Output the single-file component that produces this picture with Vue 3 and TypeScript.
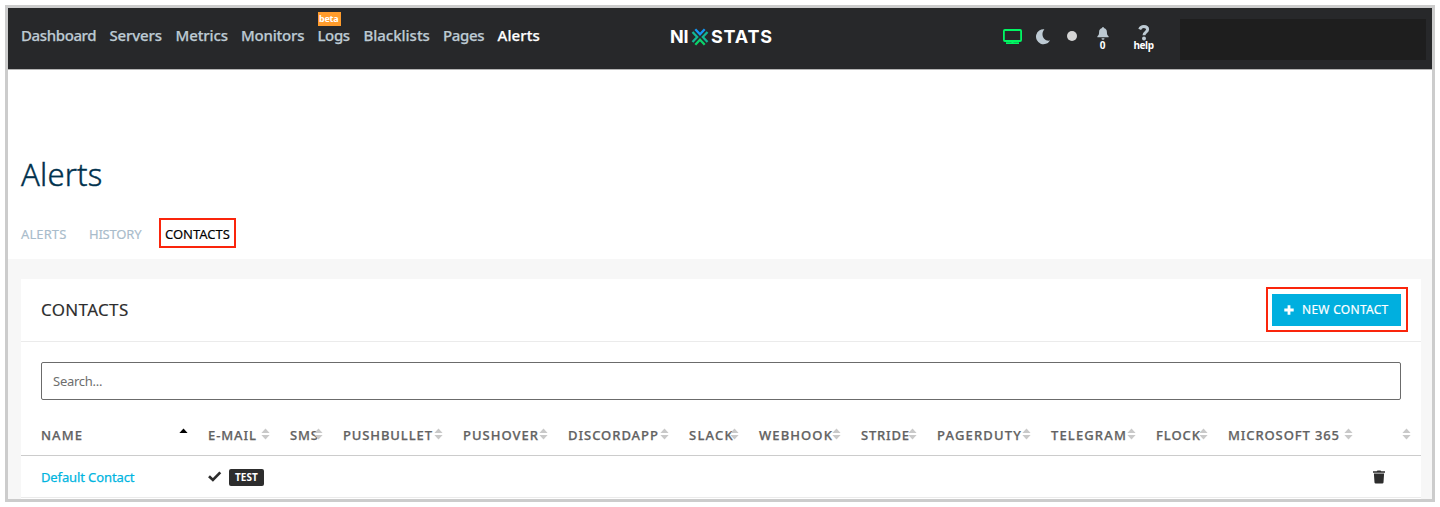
<script setup lang="ts">
interface NavItem { label: string; width: number; badge?: string; active?: boolean }
interface Column { label: string; width: number; sorted?: boolean }

const nav: NavItem[] = [
  { label: 'Dashboard', width: 75 },
  { label: 'Servers', width: 52 },
  { label: 'Metrics', width: 52 },
  { label: 'Monitors', width: 63 },
  { label: 'Logs', width: 32, badge: 'beta' },
  { label: 'Blacklists', width: 66 },
  { label: 'Pages', width: 41 },
  { label: 'Alerts', width: 42, active: true },
]

const columns: Column[] = [
  { label: 'NAME', width: 41, sorted: true },
  { label: 'E-MAIL', width: 48 },
  { label: 'SMS', width: 28 },
  { label: 'PUSHBULLET', width: 89 },
  { label: 'PUSHOVER', width: 75 },
  { label: 'DISCORDAPP', width: 90 },
  { label: 'SLACK', width: 44 },
  { label: 'WEBHOOK', width: 73 },
  { label: 'STRIDE', width: 48 },
  { label: 'PAGERDUTY', width: 84 },
  { label: 'TELEGRAM', width: 75 },
  { label: 'FLOCK', width: 44 },
  { label: 'MICROSOFT 365', width: 111 },
  { label: '', width: 0 },
]

// Tracks a label so that it fills the given width in pixels.
const vFit = {
  mounted(el: HTMLElement, binding: { value: number }) {
    const count = (el.textContent ?? '').length
    if (count < 2) return
    const natural = el.getBoundingClientRect().width
    el.style.letterSpacing = `${(binding.value + 0.4 - natural) / (count - 0.5)}px`
  },
}
</script>

<template>
  <div class="frame">
    <header class="topbar">
      <nav class="nav">
        <a v-for="item in nav" :key="item.label" class="nav-item" :class="{ active: item.active }">
          <span v-fit="item.width" class="label">{{ item.label }}</span>
          <span v-if="item.badge" class="beta"><span v-fit="19" class="label">{{ item.badge }}</span></span>
        </a>
      </nav>
      <div class="logo">
        <span v-fit="18" class="label">NI</span>
        <svg class="mark" width="18" height="18" viewBox="0 0 18 18" fill="none" stroke-width="2.300">
          <path d="M1.500 4 6.200 9 1.500 14" stroke="#12b795" />
          <path d="M16.500 4 11.800 9 16.500 14" stroke="#12b795" />
          <path d="M4.300 1.200 9 6.200 13.700 1.200" stroke="#1597f5" />
          <path d="M4.300 16.800 9 11.800 13.700 16.800" stroke="#0bd36c" />
        </svg>
        <span v-fit="61" class="label">STATS</span>
      </div>
      <div class="tools">
        <svg class="monitor" width="20" height="16" viewBox="0 0 20 16">
          <rect x=".9" y="1" width="17.200" height="11" rx="1" fill="none" stroke="#00f763" stroke-width="1.800" />
          <path d="M8.500 12h2v1.200h5.500V15H3v-1.800h5.500z" fill="#00f763" />
        </svg>
        <svg class="moon" width="15" height="16" viewBox="0 0 15 16">
          <path d="M8.400.3A7.500 7.500 0 1 0 14 11.500C8 12.800 3.900 5.600 8.400.3Z" fill="#bdcad3" />
        </svg>
        <span class="dot"></span>
        <div class="tool bell">
          <svg width="12" height="13" viewBox="0 0 12 13" fill="#bdcad3">
            <path d="M5.300 0h1.400v1C8.900 1.400 9.900 3 9.900 5c0 2.300.5 3.300 1.700 4.300v1H.4v-1C1.600 8.300 2.100 7.300 2.100 5c0-2 1-3.600 3.200-4zM4.500 11.200h3a1.500 1.500 0 0 1-3 0z" />
          </svg>
          <span>0</span>
        </div>
        <div class="tool help">
          <svg width="12" height="16" viewBox="0 0 12 16">
            <path d="M1.700 4.400C2.500 2.500 4 1.600 5.800 1.600c2.200 0 3.800 1.200 3.800 3 0 2.600-3.600 2.500-3.600 5.600" fill="none" stroke="#bdcad3" stroke-width="3" />
            <circle cx="6" cy="13.500" r="2" fill="#bdcad3" />
          </svg>
          <span v-fit="20" class="label">help</span>
        </div>
        <div class="account"></div>
      </div>
    </header>

    <section class="heading">
      <h1><span v-fit="81" class="label">Alerts</span></h1>
      <div class="tabs">
        <a class="tab"><span v-fit="45" class="label">ALERTS</span></a>
        <a class="tab second"><span v-fit="52" class="label">HISTORY</span></a>
        <a class="tab current"><span v-fit="64.500" class="label">CONTACTS</span></a>
      </div>
    </section>

    <main class="content">
      <div class="card">
        <div class="card-head">
          <h2><span v-fit="87" class="label">CONTACTS</span></h2>
          <div class="ring">
            <button class="create">
              <svg width="10" height="10" viewBox="0 0 10 10"><path d="M3.600.3h2.800v3.300h3.300v2.800H6.400v3.300H3.600V6.400H.3V3.600h3.300z" fill="#fff" /></svg>
              <span v-fit="86" class="label">NEW CONTACT</span>
            </button>
          </div>
        </div>
        <div class="search"><span v-fit="49" class="label">Search...</span></div>
        <div class="grid thead">
          <div v-for="col in columns" :key="col.label" class="th">
            <span v-fit="col.width" class="label">{{ col.label }}</span>
            <svg class="sort" width="9" height="12" viewBox="0 0 9 12" :class="{ on: col.sorted }">
              <path d="M.4 5 4.500.6 8.600 5z" />
              <path v-if="!col.sorted" d="M.4 7 4.500 11.400 8.600 7z" />
            </svg>
          </div>
        </div>
        <div class="grid row">
          <a class="contact"><span v-fit="93" class="label">Default Contact</span></a>
          <div class="email">
            <svg width="14" height="11" viewBox="0 0 14 11"><path d="M1 5.200 4.900 8.900 12.300 1.400" fill="none" stroke="#2d2d2d" stroke-width="2.700" /></svg>
            <span class="test"><span v-fit="22.500" class="label">TEST</span></span>
          </div>
          <svg class="trash" width="12" height="14" viewBox="0 0 12 14" fill="#2d2d2d">
            <path d="M0 1.300h3.700L4.500.4h3l.8.9H12v1.500H0zM.9 3.600h10.200l-.6 9a1.200 1.200 0 0 1-1.200 1H2.700a1.200 1.200 0 0 1-1.200-1z" />
          </svg>
        </div>
      </div>
    </main>
  </div>
</template>

<style>
body { background: #fff; }
</style>

<style scoped>
.frame {
  box-sizing: border-box;
  width: 1430px;
  height: 497px;
  margin: 5px;
  border: 3px solid #ccc;
  background: #fff;
  overflow: hidden;
  font-family: "Noto Sans", "Open Sans", sans-serif;
  display: flex;
  flex-direction: column;
}
.frame * { box-sizing: border-box; }
.label { display: inline-block; white-space: nowrap; }

.topbar {
  height: 62px;
  flex: none;
  background: #27282a;
  border-bottom: 1px solid #b4b4b4;
  display: flex;
}
.nav {
  width: 662px;
  padding-left: 13px;
  display: grid;
  grid-template-columns: 88.500px 66px 65.500px 76.500px 46px 79.500px 54.500px 44px;
}
.nav-item {
  position: relative;
  color: #bdcad3;
  font-size: 15px;
  font-weight: 500;
  line-height: 20px;
  padding-top: 17px;
}
.nav-item > .label { -webkit-text-stroke: 0.250px currentColor; }
.nav-item.active { color: #fff; }
.beta {
  position: absolute;
  left: 0;
  top: 4px;
  width: 23px;
  height: 14px;
  padding-left: 1.500px;
  background: #ff9c2c;
  color: #fff;
  font-size: 9px;
  font-weight: 700;
  line-height: 13px;
}
.logo {
  width: 333px;
  padding-top: 18px;
  display: grid;
  grid-template-columns: 20.500px 20.500px 70px;
  color: #fff;
  font: 700 18px/22px Inter, sans-serif;
}
.logo .label { justify-self: start; }
.mark { margin: 2px 0 0 1px; }
.tools { flex: 1; display: flex; align-items: flex-start; }
.monitor { margin-top: 20.500px; }
.moon { margin: 21px 0 0 13px; }
.dot {
  width: 10px;
  height: 10px;
  margin: 23px 0 0 16px;
  border-radius: 50%;
  background: #d5d5d5;
}
.tool {
  display: flex;
  flex-direction: column;
  align-items: center;
  color: #fff;
  font-size: 10px;
  font-weight: 700;
  line-height: 10px;
}
.bell { width: 12px; margin: 19px 0 0 19.500px; }
.help { width: 22px; margin: 17px 0 0 24px; }
.help svg { height: 16px; margin-bottom: -1px; }
.account { width: 246px; height: 41px; margin: 11px 0 0 25.500px; background: #1e1e1e; }
.mark { margin-left: 0; }

.heading { height: 189px; flex: none; padding-left: 13px; }
h1, h2 { margin: 0; }
h1 {
  height: 40px;
  padding-top: 1px;
  margin-top: 83px;
  color: #00314d;
  font-size: 31px;
  font-weight: 300;
  line-height: 40px;
  -webkit-text-stroke: 0.400px currentColor;
}
.tabs { display: flex; margin-top: 25px; font-size: 13px; line-height: 20px; -webkit-text-stroke: 0.150px currentColor; }
.tab { width: 68px; padding-top: 6px; color: #a9bccb; }
.tab.second { width: 70px; }
.tab.current {
  width: 77px;
  height: 30px;
  padding: 4px 0 0 4px;
  border: 2px solid #fa250c;
  color: #000;
}

.content { flex: 1; padding: 20px 11px 0 13px; background: #f7f7f7; }
.card { height: 220px; background: #fff; }
.card-head {
  height: 63px;
  padding: 8px 13px 0 20px;
  border-bottom: 1px solid #ebebeb;
  display: flex;
  justify-content: space-between;
}
h2 { padding-top: 11px; color: #2d2d2d; font-size: 17px; font-weight: 400; line-height: 24px; -webkit-text-stroke: 0.150px currentColor; }
.ring { width: 142px; height: 45px; padding: 5px 4px; border: 2px solid #fa250c; }
.create {
  width: 129px;
  height: 32px;
  padding: 0 0 0 12px;
  border: 0;
  background: #00afdf;
  color: #fff;
  font: 400 12px/18px "Noto Sans", sans-serif;
  -webkit-text-stroke: 0.200px currentColor;
  display: flex;
  align-items: center;
  gap: 8px;
}
.search {
  height: 38px;
  margin: 20px 20px 0;
  padding-left: 11px;
  border: 1px solid #6b6b6b;
  border-radius: 2px;
  color: #6e6e6e;
  font-size: 13px;
  line-height: 37px;
}
.grid {
  display: grid;
  padding-left: 20px;
  grid-template-columns: 167px 82px 53px 120px 105px 121px 70px 102px 76px 114px 105px 72px 145.500px 58px;
}
.thead { height: 56px; border-bottom: 1px solid #ccc; }
.th {
  position: relative;
  padding-top: 25px;
  color: #626262;
  font-size: 13px;
  font-weight: 500;
  line-height: 20px;
  -webkit-text-stroke: 0.250px currentColor;
}
.sort { position: absolute; right: 20.500px; top: 28px; fill: #c9c9c9; }
.sort.on { fill: #000; }
.row { height: 42px; border-bottom: 1px solid #ebebeb; }
.contact { padding-top: 11px; color: #00b5df; font-size: 13px; line-height: 20px; -webkit-text-stroke: 0.250px currentColor; }
.email { display: flex; }
.email svg { flex: none; margin-top: 15px; }
.test {
  width: 35px;
  height: 17px;
  margin: 13px 0 0 7px;
  padding-left: 6px;
  border-radius: 2px;
  background: #2d2d2d;
  color: #fff;
  font-size: 10px;
  font-weight: 700;
  line-height: 17px;
}
.trash { grid-column: 14; margin: 14px 0 0 -1px; }
</style>
